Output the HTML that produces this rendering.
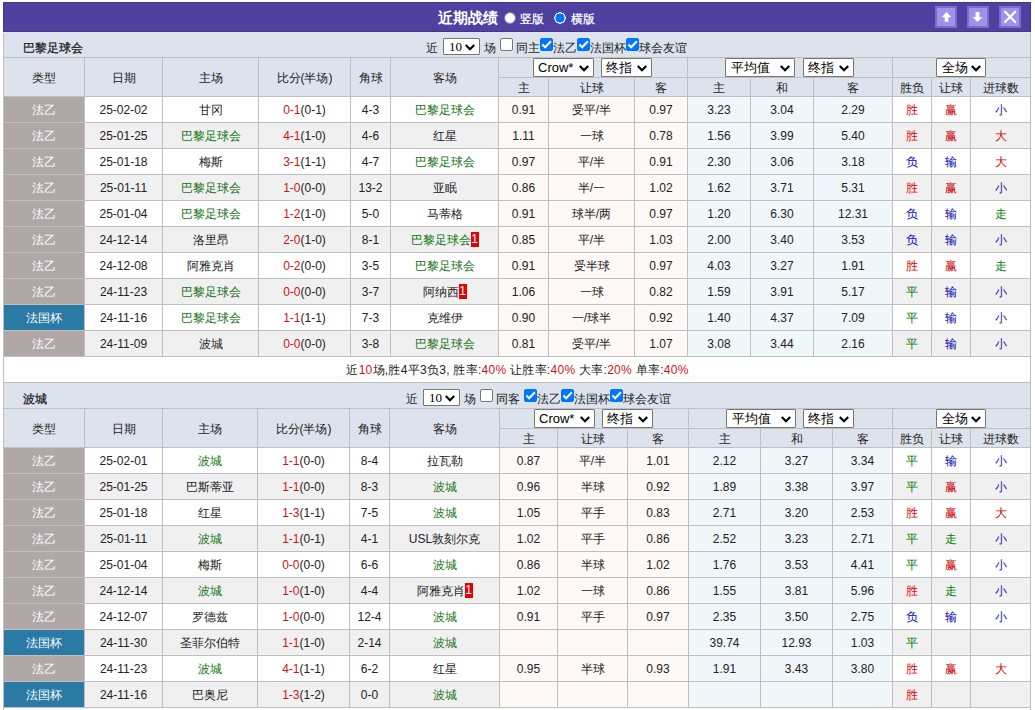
<!DOCTYPE html><html><head><meta charset="utf-8"><style>
*{margin:0;padding:0}
html,body{width:1035px;height:710px;overflow:hidden;background:#fff}
body{position:relative;font-family:"Liberation Sans",sans-serif;font-size:12px;color:#222}
.a{position:absolute;box-sizing:border-box;white-space:nowrap;overflow:hidden}
.t{position:absolute;white-space:nowrap;color:#222}
.sel{position:absolute;box-sizing:border-box;background:#fff;border:1px solid #767676;border-radius:1px;color:#000;white-space:nowrap}
.cb{position:absolute;width:13px;height:13px;box-sizing:border-box;border:1px solid #767676;border-radius:2px;background:#fff}
.cb.on{background:#0075FF;border-color:#0075FF}
.cb svg{position:absolute;left:-1px;top:-1px}
.radio{position:absolute;width:12px;height:12px;box-sizing:border-box;border-radius:50%;background:#fff;border:1px solid #767676}
.radio.on{border:none;background:radial-gradient(circle at 6px 6px,#0075FF 0,#0075FF 4.3px,#fff 4.8px,#fff 5.5px,#0060d0 6px)}
.rc{display:inline-block;background:#E80000;color:#fff;font-size:12px;line-height:15px;height:15px;width:8px;text-align:center;vertical-align:middle;margin-top:-2px;letter-spacing:0}
</style></head><body><div class="a" style="left:3px;top:2px;width:1028px;height:30px;background:#5040A0;border:1px solid #433589;"></div><div class="a" style="left:3px;top:32px;width:1028px;height:1px;background:#E4E4F8;"></div><div class="t" style="left:438px;top:8px;color:#fff;font-weight:bold;font-size:15px;line-height:20px;">近期战绩</div><div class="radio" style="left:504px;top:12px"></div><div class="t" style="left:520px;top:11px;color:#fff;font-size:12px;line-height:17px;-webkit-text-stroke:0.25px #fff;">竖版</div><div class="radio on" style="left:554px;top:12px"></div><div class="t" style="left:571px;top:11px;color:#fff;font-size:12px;line-height:17px;-webkit-text-stroke:0.25px #fff;">横版</div><div class="a" style="left:935px;top:6px;width:22px;height:22px;background:#A191EB;box-sizing:border-box;border:2px solid #7C6DCD"><svg style="position:absolute;left:-2px;top:-2px" width="22" height="22" viewBox="0 0 22 22"><path d="M11.5 6 L16.3 11.2 L13.3 11.2 L13.3 15.8 L9.7 15.8 L9.7 11.2 L6.7 11.2 Z" fill="#fff"/></svg></div><div class="a" style="left:967px;top:6px;width:22px;height:22px;background:#A191EB;box-sizing:border-box;border:2px solid #7C6DCD"><svg style="position:absolute;left:-2px;top:-2px" width="22" height="22" viewBox="0 0 22 22"><path d="M10.5 16 L15.4 11 L12.4 11 L12.4 6 L8.6 6 L8.6 11 L5.6 11 Z" fill="#fff"/></svg></div><div class="a" style="left:999px;top:6px;width:22px;height:22px;background:#A191EB;box-sizing:border-box;border:2px solid #7C6DCD"><svg style="position:absolute;left:-2px;top:-2px" width="22" height="22" viewBox="0 0 22 22"><path d="M6 5.8 L16.2 16 M16.2 5.8 L6 16" stroke="#fff" stroke-width="2.2" stroke-linecap="round"/></svg></div><div class="a" style="left:3px;top:33px;width:1028px;height:25px;background:#DCE3EC;border-left:1px solid #BFBFBF;border-right:1px solid #BFBFBF;"></div><div class="t" style="left:23px;top:39px;font-size:12px;line-height:18px;color:#222222;-webkit-text-stroke:0.3px #222222;">巴黎足球会</div><div class="t" style="left:426px;top:39px;font-size:12px;line-height:18px;">近</div><div class="sel" style="left:443px;top:38px;width:37px;height:17px;font-size:13px;line-height:15px;"><span style="position:absolute;left:5px;top:0"><span style="font-family:Liberation Serif;font-size:13px">10</span></span><svg class="chev" width="10" height="7" viewBox="0 0 10 7" style="position:absolute;right:4px;top:5px"><path d="M0.8 1 L5 5.2 L9.2 1" fill="none" stroke="#000" stroke-width="2.2"/></svg></div><div class="t" style="left:484px;top:39px;font-size:12px;line-height:18px;">场</div><div class="cb" style="left:500px;top:38px"></div><div class="t" style="left:516px;top:39px;font-size:12px;line-height:18px;">同主</div><div class="cb on" style="left:540px;top:38px"><svg width="13" height="13" viewBox="0 0 13 13"><path d="M2.4 6.4 L5.2 9.3 L10.9 3.3" fill="none" stroke="#fff" stroke-width="2.1"/></svg></div><div class="t" style="left:553px;top:39px;font-size:12px;line-height:18px;">法乙</div><div class="cb on" style="left:577px;top:38px"><svg width="13" height="13" viewBox="0 0 13 13"><path d="M2.4 6.4 L5.2 9.3 L10.9 3.3" fill="none" stroke="#fff" stroke-width="2.1"/></svg></div><div class="t" style="left:590px;top:39px;font-size:12px;line-height:18px;">法国杯</div><div class="cb on" style="left:626px;top:38px"><svg width="13" height="13" viewBox="0 0 13 13"><path d="M2.4 6.4 L5.2 9.3 L10.9 3.3" fill="none" stroke="#fff" stroke-width="2.1"/></svg></div><div class="t" style="left:639px;top:39px;font-size:12px;line-height:18px;">球会友谊</div><div class="a" style="left:3px;top:57px;width:82px;height:40px;border:1px solid #BFBFBF;background:#DCE3EC;line-height:36px;padding-top:2px;text-align:center;color:#222222;">类型</div><div class="a" style="left:84px;top:57px;width:79px;height:40px;border:1px solid #BFBFBF;background:#DCE3EC;line-height:36px;padding-top:2px;text-align:center;color:#222222;">日期</div><div class="a" style="left:162px;top:57px;width:97px;height:40px;border:1px solid #BFBFBF;background:#DCE3EC;line-height:36px;padding-top:2px;text-align:center;color:#222222;">主场</div><div class="a" style="left:258px;top:57px;width:93px;height:40px;border:1px solid #BFBFBF;background:#DCE3EC;line-height:36px;padding-top:2px;text-align:center;color:#222222;">比分(半场)</div><div class="a" style="left:350px;top:57px;width:41px;height:40px;border:1px solid #BFBFBF;background:#DCE3EC;line-height:36px;padding-top:2px;text-align:center;color:#222222;">角球</div><div class="a" style="left:390px;top:57px;width:109px;height:40px;border:1px solid #BFBFBF;background:#DCE3EC;line-height:36px;padding-top:2px;text-align:center;color:#222222;">客场</div><div class="a" style="left:498px;top:57px;width:190px;height:21px;border:1px solid #BFBFBF;background:#DCE3EC;line-height:18px;padding-top:1px;"></div><div class="a" style="left:687px;top:57px;width:206px;height:21px;border:1px solid #BFBFBF;background:#DCE3EC;line-height:18px;padding-top:1px;"></div><div class="a" style="left:892px;top:57px;width:139px;height:21px;border:1px solid #BFBFBF;background:#DCE3EC;line-height:18px;padding-top:1px;"></div><div class="sel" style="left:533px;top:58px;width:61px;height:19px;font-size:13px;line-height:17px;"><span style="position:absolute;left:4px;top:0">Crow*</span><svg class="chev" width="10" height="7" viewBox="0 0 10 7" style="position:absolute;right:4px;top:6px"><path d="M0.8 1 L5 5.2 L9.2 1" fill="none" stroke="#000" stroke-width="2.2"/></svg></div><div class="sel" style="left:601px;top:58px;width:51px;height:19px;font-size:13px;line-height:17px;"><span style="position:absolute;left:4px;top:0">终指</span><svg class="chev" width="10" height="7" viewBox="0 0 10 7" style="position:absolute;right:4px;top:6px"><path d="M0.8 1 L5 5.2 L9.2 1" fill="none" stroke="#000" stroke-width="2.2"/></svg></div><div class="sel" style="left:725px;top:58px;width:70px;height:19px;font-size:13px;line-height:17px;"><span style="position:absolute;left:5px;top:0">平均值</span><svg class="chev" width="10" height="7" viewBox="0 0 10 7" style="position:absolute;right:4px;top:6px"><path d="M0.8 1 L5 5.2 L9.2 1" fill="none" stroke="#000" stroke-width="2.2"/></svg></div><div class="sel" style="left:803px;top:58px;width:51px;height:19px;font-size:13px;line-height:17px;"><span style="position:absolute;left:4px;top:0">终指</span><svg class="chev" width="10" height="7" viewBox="0 0 10 7" style="position:absolute;right:4px;top:6px"><path d="M0.8 1 L5 5.2 L9.2 1" fill="none" stroke="#000" stroke-width="2.2"/></svg></div><div class="sel" style="left:936px;top:58px;width:50px;height:19px;font-size:13px;line-height:17px;"><span style="position:absolute;left:5px;top:0">全场</span><svg class="chev" width="10" height="7" viewBox="0 0 10 7" style="position:absolute;right:4px;top:6px"><path d="M0.8 1 L5 5.2 L9.2 1" fill="none" stroke="#000" stroke-width="2.2"/></svg></div><div class="a" style="left:498px;top:77px;width:51px;height:20px;border:1px solid #BFBFBF;background:#DCE3EC;line-height:16px;padding-top:2px;text-align:center;color:#222222;">主</div><div class="a" style="left:548px;top:77px;width:87px;height:20px;border:1px solid #BFBFBF;background:#DCE3EC;line-height:16px;padding-top:2px;text-align:center;color:#222222;">让球</div><div class="a" style="left:634px;top:77px;width:54px;height:20px;border:1px solid #BFBFBF;background:#DCE3EC;line-height:16px;padding-top:2px;text-align:center;color:#222222;">客</div><div class="a" style="left:687px;top:77px;width:64px;height:20px;border:1px solid #BFBFBF;background:#DCE3EC;line-height:16px;padding-top:2px;text-align:center;color:#222222;">主</div><div class="a" style="left:750px;top:77px;width:64px;height:20px;border:1px solid #BFBFBF;background:#DCE3EC;line-height:16px;padding-top:2px;text-align:center;color:#222222;">和</div><div class="a" style="left:813px;top:77px;width:80px;height:20px;border:1px solid #BFBFBF;background:#DCE3EC;line-height:16px;padding-top:2px;text-align:center;color:#222222;">客</div><div class="a" style="left:892px;top:77px;width:40px;height:20px;border:1px solid #BFBFBF;background:#DCE3EC;line-height:16px;padding-top:2px;text-align:center;color:#222222;">胜负</div><div class="a" style="left:931px;top:77px;width:40px;height:20px;border:1px solid #BFBFBF;background:#DCE3EC;line-height:16px;padding-top:2px;text-align:center;color:#222222;">让球</div><div class="a" style="left:970px;top:77px;width:61px;height:20px;border:1px solid #BFBFBF;background:#DCE3EC;line-height:16px;padding-top:2px;text-align:center;color:#222222;">进球数</div><div class="a" style="left:3px;top:96px;width:82px;height:27px;border:1px solid #BFBFBF;background:#B0A8A7;line-height:24px;padding-top:1px;text-align:center;color:#fff;">法乙</div><div class="a" style="left:84px;top:96px;width:79px;height:27px;border:1px solid #BFBFBF;background:#FFFFFF;line-height:24px;padding-top:1px;text-align:center;color:#222222;">25-02-02</div><div class="a" style="left:162px;top:96px;width:97px;height:27px;border:1px solid #BFBFBF;background:#FFFFFF;line-height:24px;padding-top:1px;text-align:center;color:#222222;">甘冈</div><div class="a" style="left:258px;top:96px;width:93px;height:27px;border:1px solid #BFBFBF;background:#FFFFFF;line-height:24px;padding-top:1px;text-align:center;color:#222222;"><span style="color:#CC1418">0-1</span>(0-1)</div><div class="a" style="left:350px;top:96px;width:41px;height:27px;border:1px solid #BFBFBF;background:#FFFFFF;line-height:24px;padding-top:1px;text-align:center;color:#222222;">4-3</div><div class="a" style="left:390px;top:96px;width:109px;height:27px;border:1px solid #BFBFBF;background:#FFFFFF;line-height:24px;padding-top:1px;text-align:center;color:#222222;"><span style="color:#137313">巴黎足球会</span></div><div class="a" style="left:498px;top:96px;width:51px;height:27px;border:1px solid #BFBFBF;background:#FEF9F6;line-height:24px;padding-top:1px;text-align:center;color:#222222;">0.91</div><div class="a" style="left:548px;top:96px;width:87px;height:27px;border:1px solid #BFBFBF;background:#FEF9F6;line-height:24px;padding-top:1px;text-align:center;color:#222222;">受平/半</div><div class="a" style="left:634px;top:96px;width:54px;height:27px;border:1px solid #BFBFBF;background:#FEF9F6;line-height:24px;padding-top:1px;text-align:center;color:#222222;">0.97</div><div class="a" style="left:687px;top:96px;width:64px;height:27px;border:1px solid #BFBFBF;background:#F0F7FB;line-height:24px;padding-top:1px;text-align:center;color:#222222;">3.23</div><div class="a" style="left:750px;top:96px;width:64px;height:27px;border:1px solid #BFBFBF;background:#F0F7FB;line-height:24px;padding-top:1px;text-align:center;color:#222222;">3.04</div><div class="a" style="left:813px;top:96px;width:80px;height:27px;border:1px solid #BFBFBF;background:#F0F7FB;line-height:24px;padding-top:1px;text-align:center;color:#222222;">2.29</div><div class="a" style="left:892px;top:96px;width:40px;height:27px;border:1px solid #BFBFBF;background:#FFFFFF;line-height:24px;padding-top:1px;text-align:center;"><span style="color:#E80000">胜</span></div><div class="a" style="left:931px;top:96px;width:40px;height:27px;border:1px solid #BFBFBF;background:#FFFFFF;line-height:24px;padding-top:1px;text-align:center;"><span style="color:#CC0000">赢</span></div><div class="a" style="left:970px;top:96px;width:61px;height:27px;border:1px solid #BFBFBF;background:#FFFFFF;line-height:24px;padding-top:1px;text-align:center;"><span style="color:#1422A0">小</span></div><div class="a" style="left:3px;top:122px;width:82px;height:27px;border:1px solid #BFBFBF;background:#B0A8A7;line-height:24px;padding-top:1px;text-align:center;color:#fff;">法乙</div><div class="a" style="left:84px;top:122px;width:79px;height:27px;border:1px solid #BFBFBF;background:#F0F0F0;line-height:24px;padding-top:1px;text-align:center;color:#222222;">25-01-25</div><div class="a" style="left:162px;top:122px;width:97px;height:27px;border:1px solid #BFBFBF;background:#F0F0F0;line-height:24px;padding-top:1px;text-align:center;color:#222222;"><span style="color:#137313">巴黎足球会</span></div><div class="a" style="left:258px;top:122px;width:93px;height:27px;border:1px solid #BFBFBF;background:#F0F0F0;line-height:24px;padding-top:1px;text-align:center;color:#222222;"><span style="color:#CC1418">4-1</span>(1-0)</div><div class="a" style="left:350px;top:122px;width:41px;height:27px;border:1px solid #BFBFBF;background:#F0F0F0;line-height:24px;padding-top:1px;text-align:center;color:#222222;">4-6</div><div class="a" style="left:390px;top:122px;width:109px;height:27px;border:1px solid #BFBFBF;background:#F0F0F0;line-height:24px;padding-top:1px;text-align:center;color:#222222;">红星</div><div class="a" style="left:498px;top:122px;width:51px;height:27px;border:1px solid #BFBFBF;background:#FEF9F6;line-height:24px;padding-top:1px;text-align:center;color:#222222;">1.11</div><div class="a" style="left:548px;top:122px;width:87px;height:27px;border:1px solid #BFBFBF;background:#FEF9F6;line-height:24px;padding-top:1px;text-align:center;color:#222222;">一球</div><div class="a" style="left:634px;top:122px;width:54px;height:27px;border:1px solid #BFBFBF;background:#FEF9F6;line-height:24px;padding-top:1px;text-align:center;color:#222222;">0.78</div><div class="a" style="left:687px;top:122px;width:64px;height:27px;border:1px solid #BFBFBF;background:#F0F7FB;line-height:24px;padding-top:1px;text-align:center;color:#222222;">1.56</div><div class="a" style="left:750px;top:122px;width:64px;height:27px;border:1px solid #BFBFBF;background:#F0F7FB;line-height:24px;padding-top:1px;text-align:center;color:#222222;">3.99</div><div class="a" style="left:813px;top:122px;width:80px;height:27px;border:1px solid #BFBFBF;background:#F0F7FB;line-height:24px;padding-top:1px;text-align:center;color:#222222;">5.40</div><div class="a" style="left:892px;top:122px;width:40px;height:27px;border:1px solid #BFBFBF;background:#F0F0F0;line-height:24px;padding-top:1px;text-align:center;"><span style="color:#E80000">胜</span></div><div class="a" style="left:931px;top:122px;width:40px;height:27px;border:1px solid #BFBFBF;background:#F0F0F0;line-height:24px;padding-top:1px;text-align:center;"><span style="color:#CC0000">赢</span></div><div class="a" style="left:970px;top:122px;width:61px;height:27px;border:1px solid #BFBFBF;background:#F0F0F0;line-height:24px;padding-top:1px;text-align:center;"><span style="color:#D40000">大</span></div><div class="a" style="left:3px;top:148px;width:82px;height:27px;border:1px solid #BFBFBF;background:#B0A8A7;line-height:24px;padding-top:1px;text-align:center;color:#fff;">法乙</div><div class="a" style="left:84px;top:148px;width:79px;height:27px;border:1px solid #BFBFBF;background:#FFFFFF;line-height:24px;padding-top:1px;text-align:center;color:#222222;">25-01-18</div><div class="a" style="left:162px;top:148px;width:97px;height:27px;border:1px solid #BFBFBF;background:#FFFFFF;line-height:24px;padding-top:1px;text-align:center;color:#222222;">梅斯</div><div class="a" style="left:258px;top:148px;width:93px;height:27px;border:1px solid #BFBFBF;background:#FFFFFF;line-height:24px;padding-top:1px;text-align:center;color:#222222;"><span style="color:#CC1418">3-1</span>(1-1)</div><div class="a" style="left:350px;top:148px;width:41px;height:27px;border:1px solid #BFBFBF;background:#FFFFFF;line-height:24px;padding-top:1px;text-align:center;color:#222222;">4-7</div><div class="a" style="left:390px;top:148px;width:109px;height:27px;border:1px solid #BFBFBF;background:#FFFFFF;line-height:24px;padding-top:1px;text-align:center;color:#222222;"><span style="color:#137313">巴黎足球会</span></div><div class="a" style="left:498px;top:148px;width:51px;height:27px;border:1px solid #BFBFBF;background:#FEF9F6;line-height:24px;padding-top:1px;text-align:center;color:#222222;">0.97</div><div class="a" style="left:548px;top:148px;width:87px;height:27px;border:1px solid #BFBFBF;background:#FEF9F6;line-height:24px;padding-top:1px;text-align:center;color:#222222;">平/半</div><div class="a" style="left:634px;top:148px;width:54px;height:27px;border:1px solid #BFBFBF;background:#FEF9F6;line-height:24px;padding-top:1px;text-align:center;color:#222222;">0.91</div><div class="a" style="left:687px;top:148px;width:64px;height:27px;border:1px solid #BFBFBF;background:#F0F7FB;line-height:24px;padding-top:1px;text-align:center;color:#222222;">2.30</div><div class="a" style="left:750px;top:148px;width:64px;height:27px;border:1px solid #BFBFBF;background:#F0F7FB;line-height:24px;padding-top:1px;text-align:center;color:#222222;">3.06</div><div class="a" style="left:813px;top:148px;width:80px;height:27px;border:1px solid #BFBFBF;background:#F0F7FB;line-height:24px;padding-top:1px;text-align:center;color:#222222;">3.18</div><div class="a" style="left:892px;top:148px;width:40px;height:27px;border:1px solid #BFBFBF;background:#FFFFFF;line-height:24px;padding-top:1px;text-align:center;"><span style="color:#0000C8">负</span></div><div class="a" style="left:931px;top:148px;width:40px;height:27px;border:1px solid #BFBFBF;background:#FFFFFF;line-height:24px;padding-top:1px;text-align:center;"><span style="color:#0000AA">输</span></div><div class="a" style="left:970px;top:148px;width:61px;height:27px;border:1px solid #BFBFBF;background:#FFFFFF;line-height:24px;padding-top:1px;text-align:center;"><span style="color:#D40000">大</span></div><div class="a" style="left:3px;top:174px;width:82px;height:27px;border:1px solid #BFBFBF;background:#B0A8A7;line-height:24px;padding-top:1px;text-align:center;color:#fff;">法乙</div><div class="a" style="left:84px;top:174px;width:79px;height:27px;border:1px solid #BFBFBF;background:#F0F0F0;line-height:24px;padding-top:1px;text-align:center;color:#222222;">25-01-11</div><div class="a" style="left:162px;top:174px;width:97px;height:27px;border:1px solid #BFBFBF;background:#F0F0F0;line-height:24px;padding-top:1px;text-align:center;color:#222222;"><span style="color:#137313">巴黎足球会</span></div><div class="a" style="left:258px;top:174px;width:93px;height:27px;border:1px solid #BFBFBF;background:#F0F0F0;line-height:24px;padding-top:1px;text-align:center;color:#222222;"><span style="color:#CC1418">1-0</span>(0-0)</div><div class="a" style="left:350px;top:174px;width:41px;height:27px;border:1px solid #BFBFBF;background:#F0F0F0;line-height:24px;padding-top:1px;text-align:center;color:#222222;">13-2</div><div class="a" style="left:390px;top:174px;width:109px;height:27px;border:1px solid #BFBFBF;background:#F0F0F0;line-height:24px;padding-top:1px;text-align:center;color:#222222;">亚眠</div><div class="a" style="left:498px;top:174px;width:51px;height:27px;border:1px solid #BFBFBF;background:#FEF9F6;line-height:24px;padding-top:1px;text-align:center;color:#222222;">0.86</div><div class="a" style="left:548px;top:174px;width:87px;height:27px;border:1px solid #BFBFBF;background:#FEF9F6;line-height:24px;padding-top:1px;text-align:center;color:#222222;">半/一</div><div class="a" style="left:634px;top:174px;width:54px;height:27px;border:1px solid #BFBFBF;background:#FEF9F6;line-height:24px;padding-top:1px;text-align:center;color:#222222;">1.02</div><div class="a" style="left:687px;top:174px;width:64px;height:27px;border:1px solid #BFBFBF;background:#F0F7FB;line-height:24px;padding-top:1px;text-align:center;color:#222222;">1.62</div><div class="a" style="left:750px;top:174px;width:64px;height:27px;border:1px solid #BFBFBF;background:#F0F7FB;line-height:24px;padding-top:1px;text-align:center;color:#222222;">3.71</div><div class="a" style="left:813px;top:174px;width:80px;height:27px;border:1px solid #BFBFBF;background:#F0F7FB;line-height:24px;padding-top:1px;text-align:center;color:#222222;">5.31</div><div class="a" style="left:892px;top:174px;width:40px;height:27px;border:1px solid #BFBFBF;background:#F0F0F0;line-height:24px;padding-top:1px;text-align:center;"><span style="color:#E80000">胜</span></div><div class="a" style="left:931px;top:174px;width:40px;height:27px;border:1px solid #BFBFBF;background:#F0F0F0;line-height:24px;padding-top:1px;text-align:center;"><span style="color:#CC0000">赢</span></div><div class="a" style="left:970px;top:174px;width:61px;height:27px;border:1px solid #BFBFBF;background:#F0F0F0;line-height:24px;padding-top:1px;text-align:center;"><span style="color:#1422A0">小</span></div><div class="a" style="left:3px;top:200px;width:82px;height:27px;border:1px solid #BFBFBF;background:#B0A8A7;line-height:24px;padding-top:1px;text-align:center;color:#fff;">法乙</div><div class="a" style="left:84px;top:200px;width:79px;height:27px;border:1px solid #BFBFBF;background:#FFFFFF;line-height:24px;padding-top:1px;text-align:center;color:#222222;">25-01-04</div><div class="a" style="left:162px;top:200px;width:97px;height:27px;border:1px solid #BFBFBF;background:#FFFFFF;line-height:24px;padding-top:1px;text-align:center;color:#222222;"><span style="color:#137313">巴黎足球会</span></div><div class="a" style="left:258px;top:200px;width:93px;height:27px;border:1px solid #BFBFBF;background:#FFFFFF;line-height:24px;padding-top:1px;text-align:center;color:#222222;"><span style="color:#CC1418">1-2</span>(1-0)</div><div class="a" style="left:350px;top:200px;width:41px;height:27px;border:1px solid #BFBFBF;background:#FFFFFF;line-height:24px;padding-top:1px;text-align:center;color:#222222;">5-0</div><div class="a" style="left:390px;top:200px;width:109px;height:27px;border:1px solid #BFBFBF;background:#FFFFFF;line-height:24px;padding-top:1px;text-align:center;color:#222222;">马蒂格</div><div class="a" style="left:498px;top:200px;width:51px;height:27px;border:1px solid #BFBFBF;background:#FEF9F6;line-height:24px;padding-top:1px;text-align:center;color:#222222;">0.91</div><div class="a" style="left:548px;top:200px;width:87px;height:27px;border:1px solid #BFBFBF;background:#FEF9F6;line-height:24px;padding-top:1px;text-align:center;color:#222222;">球半/两</div><div class="a" style="left:634px;top:200px;width:54px;height:27px;border:1px solid #BFBFBF;background:#FEF9F6;line-height:24px;padding-top:1px;text-align:center;color:#222222;">0.97</div><div class="a" style="left:687px;top:200px;width:64px;height:27px;border:1px solid #BFBFBF;background:#F0F7FB;line-height:24px;padding-top:1px;text-align:center;color:#222222;">1.20</div><div class="a" style="left:750px;top:200px;width:64px;height:27px;border:1px solid #BFBFBF;background:#F0F7FB;line-height:24px;padding-top:1px;text-align:center;color:#222222;">6.30</div><div class="a" style="left:813px;top:200px;width:80px;height:27px;border:1px solid #BFBFBF;background:#F0F7FB;line-height:24px;padding-top:1px;text-align:center;color:#222222;">12.31</div><div class="a" style="left:892px;top:200px;width:40px;height:27px;border:1px solid #BFBFBF;background:#FFFFFF;line-height:24px;padding-top:1px;text-align:center;"><span style="color:#0000C8">负</span></div><div class="a" style="left:931px;top:200px;width:40px;height:27px;border:1px solid #BFBFBF;background:#FFFFFF;line-height:24px;padding-top:1px;text-align:center;"><span style="color:#0000AA">输</span></div><div class="a" style="left:970px;top:200px;width:61px;height:27px;border:1px solid #BFBFBF;background:#FFFFFF;line-height:24px;padding-top:1px;text-align:center;"><span style="color:#008000">走</span></div><div class="a" style="left:3px;top:226px;width:82px;height:27px;border:1px solid #BFBFBF;background:#B0A8A7;line-height:24px;padding-top:1px;text-align:center;color:#fff;">法乙</div><div class="a" style="left:84px;top:226px;width:79px;height:27px;border:1px solid #BFBFBF;background:#F0F0F0;line-height:24px;padding-top:1px;text-align:center;color:#222222;">24-12-14</div><div class="a" style="left:162px;top:226px;width:97px;height:27px;border:1px solid #BFBFBF;background:#F0F0F0;line-height:24px;padding-top:1px;text-align:center;color:#222222;">洛里昂</div><div class="a" style="left:258px;top:226px;width:93px;height:27px;border:1px solid #BFBFBF;background:#F0F0F0;line-height:24px;padding-top:1px;text-align:center;color:#222222;"><span style="color:#CC1418">2-0</span>(1-0)</div><div class="a" style="left:350px;top:226px;width:41px;height:27px;border:1px solid #BFBFBF;background:#F0F0F0;line-height:24px;padding-top:1px;text-align:center;color:#222222;">8-1</div><div class="a" style="left:390px;top:226px;width:109px;height:27px;border:1px solid #BFBFBF;background:#F0F0F0;line-height:24px;padding-top:1px;text-align:center;color:#222222;"><span style="color:#137313">巴黎足球会</span><span class="rc">1</span></div><div class="a" style="left:498px;top:226px;width:51px;height:27px;border:1px solid #BFBFBF;background:#FEF9F6;line-height:24px;padding-top:1px;text-align:center;color:#222222;">0.85</div><div class="a" style="left:548px;top:226px;width:87px;height:27px;border:1px solid #BFBFBF;background:#FEF9F6;line-height:24px;padding-top:1px;text-align:center;color:#222222;">平/半</div><div class="a" style="left:634px;top:226px;width:54px;height:27px;border:1px solid #BFBFBF;background:#FEF9F6;line-height:24px;padding-top:1px;text-align:center;color:#222222;">1.03</div><div class="a" style="left:687px;top:226px;width:64px;height:27px;border:1px solid #BFBFBF;background:#F0F7FB;line-height:24px;padding-top:1px;text-align:center;color:#222222;">2.00</div><div class="a" style="left:750px;top:226px;width:64px;height:27px;border:1px solid #BFBFBF;background:#F0F7FB;line-height:24px;padding-top:1px;text-align:center;color:#222222;">3.40</div><div class="a" style="left:813px;top:226px;width:80px;height:27px;border:1px solid #BFBFBF;background:#F0F7FB;line-height:24px;padding-top:1px;text-align:center;color:#222222;">3.53</div><div class="a" style="left:892px;top:226px;width:40px;height:27px;border:1px solid #BFBFBF;background:#F0F0F0;line-height:24px;padding-top:1px;text-align:center;"><span style="color:#0000C8">负</span></div><div class="a" style="left:931px;top:226px;width:40px;height:27px;border:1px solid #BFBFBF;background:#F0F0F0;line-height:24px;padding-top:1px;text-align:center;"><span style="color:#0000AA">输</span></div><div class="a" style="left:970px;top:226px;width:61px;height:27px;border:1px solid #BFBFBF;background:#F0F0F0;line-height:24px;padding-top:1px;text-align:center;"><span style="color:#1422A0">小</span></div><div class="a" style="left:3px;top:252px;width:82px;height:27px;border:1px solid #BFBFBF;background:#B0A8A7;line-height:24px;padding-top:1px;text-align:center;color:#fff;">法乙</div><div class="a" style="left:84px;top:252px;width:79px;height:27px;border:1px solid #BFBFBF;background:#FFFFFF;line-height:24px;padding-top:1px;text-align:center;color:#222222;">24-12-08</div><div class="a" style="left:162px;top:252px;width:97px;height:27px;border:1px solid #BFBFBF;background:#FFFFFF;line-height:24px;padding-top:1px;text-align:center;color:#222222;">阿雅克肖</div><div class="a" style="left:258px;top:252px;width:93px;height:27px;border:1px solid #BFBFBF;background:#FFFFFF;line-height:24px;padding-top:1px;text-align:center;color:#222222;"><span style="color:#CC1418">0-2</span>(0-0)</div><div class="a" style="left:350px;top:252px;width:41px;height:27px;border:1px solid #BFBFBF;background:#FFFFFF;line-height:24px;padding-top:1px;text-align:center;color:#222222;">3-5</div><div class="a" style="left:390px;top:252px;width:109px;height:27px;border:1px solid #BFBFBF;background:#FFFFFF;line-height:24px;padding-top:1px;text-align:center;color:#222222;"><span style="color:#137313">巴黎足球会</span></div><div class="a" style="left:498px;top:252px;width:51px;height:27px;border:1px solid #BFBFBF;background:#FEF9F6;line-height:24px;padding-top:1px;text-align:center;color:#222222;">0.91</div><div class="a" style="left:548px;top:252px;width:87px;height:27px;border:1px solid #BFBFBF;background:#FEF9F6;line-height:24px;padding-top:1px;text-align:center;color:#222222;">受半球</div><div class="a" style="left:634px;top:252px;width:54px;height:27px;border:1px solid #BFBFBF;background:#FEF9F6;line-height:24px;padding-top:1px;text-align:center;color:#222222;">0.97</div><div class="a" style="left:687px;top:252px;width:64px;height:27px;border:1px solid #BFBFBF;background:#F0F7FB;line-height:24px;padding-top:1px;text-align:center;color:#222222;">4.03</div><div class="a" style="left:750px;top:252px;width:64px;height:27px;border:1px solid #BFBFBF;background:#F0F7FB;line-height:24px;padding-top:1px;text-align:center;color:#222222;">3.27</div><div class="a" style="left:813px;top:252px;width:80px;height:27px;border:1px solid #BFBFBF;background:#F0F7FB;line-height:24px;padding-top:1px;text-align:center;color:#222222;">1.91</div><div class="a" style="left:892px;top:252px;width:40px;height:27px;border:1px solid #BFBFBF;background:#FFFFFF;line-height:24px;padding-top:1px;text-align:center;"><span style="color:#E80000">胜</span></div><div class="a" style="left:931px;top:252px;width:40px;height:27px;border:1px solid #BFBFBF;background:#FFFFFF;line-height:24px;padding-top:1px;text-align:center;"><span style="color:#CC0000">赢</span></div><div class="a" style="left:970px;top:252px;width:61px;height:27px;border:1px solid #BFBFBF;background:#FFFFFF;line-height:24px;padding-top:1px;text-align:center;"><span style="color:#008000">走</span></div><div class="a" style="left:3px;top:278px;width:82px;height:27px;border:1px solid #BFBFBF;background:#B0A8A7;line-height:24px;padding-top:1px;text-align:center;color:#fff;">法乙</div><div class="a" style="left:84px;top:278px;width:79px;height:27px;border:1px solid #BFBFBF;background:#F0F0F0;line-height:24px;padding-top:1px;text-align:center;color:#222222;">24-11-23</div><div class="a" style="left:162px;top:278px;width:97px;height:27px;border:1px solid #BFBFBF;background:#F0F0F0;line-height:24px;padding-top:1px;text-align:center;color:#222222;"><span style="color:#137313">巴黎足球会</span></div><div class="a" style="left:258px;top:278px;width:93px;height:27px;border:1px solid #BFBFBF;background:#F0F0F0;line-height:24px;padding-top:1px;text-align:center;color:#222222;"><span style="color:#CC1418">0-0</span>(0-0)</div><div class="a" style="left:350px;top:278px;width:41px;height:27px;border:1px solid #BFBFBF;background:#F0F0F0;line-height:24px;padding-top:1px;text-align:center;color:#222222;">3-7</div><div class="a" style="left:390px;top:278px;width:109px;height:27px;border:1px solid #BFBFBF;background:#F0F0F0;line-height:24px;padding-top:1px;text-align:center;color:#222222;">阿纳西<span class="rc">1</span></div><div class="a" style="left:498px;top:278px;width:51px;height:27px;border:1px solid #BFBFBF;background:#FEF9F6;line-height:24px;padding-top:1px;text-align:center;color:#222222;">1.06</div><div class="a" style="left:548px;top:278px;width:87px;height:27px;border:1px solid #BFBFBF;background:#FEF9F6;line-height:24px;padding-top:1px;text-align:center;color:#222222;">一球</div><div class="a" style="left:634px;top:278px;width:54px;height:27px;border:1px solid #BFBFBF;background:#FEF9F6;line-height:24px;padding-top:1px;text-align:center;color:#222222;">0.82</div><div class="a" style="left:687px;top:278px;width:64px;height:27px;border:1px solid #BFBFBF;background:#F0F7FB;line-height:24px;padding-top:1px;text-align:center;color:#222222;">1.59</div><div class="a" style="left:750px;top:278px;width:64px;height:27px;border:1px solid #BFBFBF;background:#F0F7FB;line-height:24px;padding-top:1px;text-align:center;color:#222222;">3.91</div><div class="a" style="left:813px;top:278px;width:80px;height:27px;border:1px solid #BFBFBF;background:#F0F7FB;line-height:24px;padding-top:1px;text-align:center;color:#222222;">5.17</div><div class="a" style="left:892px;top:278px;width:40px;height:27px;border:1px solid #BFBFBF;background:#F0F0F0;line-height:24px;padding-top:1px;text-align:center;"><span style="color:#008000">平</span></div><div class="a" style="left:931px;top:278px;width:40px;height:27px;border:1px solid #BFBFBF;background:#F0F0F0;line-height:24px;padding-top:1px;text-align:center;"><span style="color:#0000AA">输</span></div><div class="a" style="left:970px;top:278px;width:61px;height:27px;border:1px solid #BFBFBF;background:#F0F0F0;line-height:24px;padding-top:1px;text-align:center;"><span style="color:#1422A0">小</span></div><div class="a" style="left:3px;top:304px;width:82px;height:27px;border:1px solid #BFBFBF;background:#2A7AA5;line-height:24px;padding-top:1px;text-align:center;color:#fff;">法国杯</div><div class="a" style="left:84px;top:304px;width:79px;height:27px;border:1px solid #BFBFBF;background:#FFFFFF;line-height:24px;padding-top:1px;text-align:center;color:#222222;">24-11-16</div><div class="a" style="left:162px;top:304px;width:97px;height:27px;border:1px solid #BFBFBF;background:#FFFFFF;line-height:24px;padding-top:1px;text-align:center;color:#222222;"><span style="color:#137313">巴黎足球会</span></div><div class="a" style="left:258px;top:304px;width:93px;height:27px;border:1px solid #BFBFBF;background:#FFFFFF;line-height:24px;padding-top:1px;text-align:center;color:#222222;"><span style="color:#CC1418">1-1</span>(1-1)</div><div class="a" style="left:350px;top:304px;width:41px;height:27px;border:1px solid #BFBFBF;background:#FFFFFF;line-height:24px;padding-top:1px;text-align:center;color:#222222;">7-3</div><div class="a" style="left:390px;top:304px;width:109px;height:27px;border:1px solid #BFBFBF;background:#FFFFFF;line-height:24px;padding-top:1px;text-align:center;color:#222222;">克维伊</div><div class="a" style="left:498px;top:304px;width:51px;height:27px;border:1px solid #BFBFBF;background:#FEF9F6;line-height:24px;padding-top:1px;text-align:center;color:#222222;">0.90</div><div class="a" style="left:548px;top:304px;width:87px;height:27px;border:1px solid #BFBFBF;background:#FEF9F6;line-height:24px;padding-top:1px;text-align:center;color:#222222;">一/球半</div><div class="a" style="left:634px;top:304px;width:54px;height:27px;border:1px solid #BFBFBF;background:#FEF9F6;line-height:24px;padding-top:1px;text-align:center;color:#222222;">0.92</div><div class="a" style="left:687px;top:304px;width:64px;height:27px;border:1px solid #BFBFBF;background:#F0F7FB;line-height:24px;padding-top:1px;text-align:center;color:#222222;">1.40</div><div class="a" style="left:750px;top:304px;width:64px;height:27px;border:1px solid #BFBFBF;background:#F0F7FB;line-height:24px;padding-top:1px;text-align:center;color:#222222;">4.37</div><div class="a" style="left:813px;top:304px;width:80px;height:27px;border:1px solid #BFBFBF;background:#F0F7FB;line-height:24px;padding-top:1px;text-align:center;color:#222222;">7.09</div><div class="a" style="left:892px;top:304px;width:40px;height:27px;border:1px solid #BFBFBF;background:#FFFFFF;line-height:24px;padding-top:1px;text-align:center;"><span style="color:#008000">平</span></div><div class="a" style="left:931px;top:304px;width:40px;height:27px;border:1px solid #BFBFBF;background:#FFFFFF;line-height:24px;padding-top:1px;text-align:center;"><span style="color:#0000AA">输</span></div><div class="a" style="left:970px;top:304px;width:61px;height:27px;border:1px solid #BFBFBF;background:#FFFFFF;line-height:24px;padding-top:1px;text-align:center;"><span style="color:#1422A0">小</span></div><div class="a" style="left:3px;top:330px;width:82px;height:27px;border:1px solid #BFBFBF;background:#B0A8A7;line-height:24px;padding-top:1px;text-align:center;color:#fff;">法乙</div><div class="a" style="left:84px;top:330px;width:79px;height:27px;border:1px solid #BFBFBF;background:#F0F0F0;line-height:24px;padding-top:1px;text-align:center;color:#222222;">24-11-09</div><div class="a" style="left:162px;top:330px;width:97px;height:27px;border:1px solid #BFBFBF;background:#F0F0F0;line-height:24px;padding-top:1px;text-align:center;color:#222222;">波城</div><div class="a" style="left:258px;top:330px;width:93px;height:27px;border:1px solid #BFBFBF;background:#F0F0F0;line-height:24px;padding-top:1px;text-align:center;color:#222222;"><span style="color:#CC1418">0-0</span>(0-0)</div><div class="a" style="left:350px;top:330px;width:41px;height:27px;border:1px solid #BFBFBF;background:#F0F0F0;line-height:24px;padding-top:1px;text-align:center;color:#222222;">3-8</div><div class="a" style="left:390px;top:330px;width:109px;height:27px;border:1px solid #BFBFBF;background:#F0F0F0;line-height:24px;padding-top:1px;text-align:center;color:#222222;"><span style="color:#137313">巴黎足球会</span></div><div class="a" style="left:498px;top:330px;width:51px;height:27px;border:1px solid #BFBFBF;background:#FEF9F6;line-height:24px;padding-top:1px;text-align:center;color:#222222;">0.81</div><div class="a" style="left:548px;top:330px;width:87px;height:27px;border:1px solid #BFBFBF;background:#FEF9F6;line-height:24px;padding-top:1px;text-align:center;color:#222222;">受平/半</div><div class="a" style="left:634px;top:330px;width:54px;height:27px;border:1px solid #BFBFBF;background:#FEF9F6;line-height:24px;padding-top:1px;text-align:center;color:#222222;">1.07</div><div class="a" style="left:687px;top:330px;width:64px;height:27px;border:1px solid #BFBFBF;background:#F0F7FB;line-height:24px;padding-top:1px;text-align:center;color:#222222;">3.08</div><div class="a" style="left:750px;top:330px;width:64px;height:27px;border:1px solid #BFBFBF;background:#F0F7FB;line-height:24px;padding-top:1px;text-align:center;color:#222222;">3.44</div><div class="a" style="left:813px;top:330px;width:80px;height:27px;border:1px solid #BFBFBF;background:#F0F7FB;line-height:24px;padding-top:1px;text-align:center;color:#222222;">2.16</div><div class="a" style="left:892px;top:330px;width:40px;height:27px;border:1px solid #BFBFBF;background:#F0F0F0;line-height:24px;padding-top:1px;text-align:center;"><span style="color:#008000">平</span></div><div class="a" style="left:931px;top:330px;width:40px;height:27px;border:1px solid #BFBFBF;background:#F0F0F0;line-height:24px;padding-top:1px;text-align:center;"><span style="color:#0000AA">输</span></div><div class="a" style="left:970px;top:330px;width:61px;height:27px;border:1px solid #BFBFBF;background:#F0F0F0;line-height:24px;padding-top:1px;text-align:center;"><span style="color:#1422A0">小</span></div><div class="a" style="left:3px;top:356px;width:1028px;height:27px;border:1px solid #BFBFBF;background:#fff;line-height:24px;padding-top:1px;padding-left:1px;letter-spacing:0.28px;text-align:center;color:#222222;">近<span style="color:#CC1418">10</span>场,胜4平3负3, 胜率:<span style="color:#CC1418">40%</span> 让胜率:<span style="color:#CC1418">40%</span> 大率:<span style="color:#CC1418">20%</span> 单率:<span style="color:#CC1418">40%</span></div><div class="a" style="left:3px;top:382px;width:1028px;height:27px;background:#DCE3EC;border-left:1px solid #BFBFBF;border-right:1px solid #BFBFBF;border-top:1px solid #BFBFBF;"></div><div class="t" style="left:23px;top:390px;font-size:12px;line-height:18px;color:#222222;-webkit-text-stroke:0.3px #222222;">波城</div><div class="t" style="left:406px;top:390px;font-size:12px;line-height:18px;">近</div><div class="sel" style="left:423px;top:389px;width:37px;height:17px;font-size:13px;line-height:15px;"><span style="position:absolute;left:5px;top:0"><span style="font-family:Liberation Serif;font-size:13px">10</span></span><svg class="chev" width="10" height="7" viewBox="0 0 10 7" style="position:absolute;right:4px;top:5px"><path d="M0.8 1 L5 5.2 L9.2 1" fill="none" stroke="#000" stroke-width="2.2"/></svg></div><div class="t" style="left:464px;top:390px;font-size:12px;line-height:18px;">场</div><div class="cb" style="left:480px;top:389px"></div><div class="t" style="left:496px;top:390px;font-size:12px;line-height:18px;">同客</div><div class="cb on" style="left:524px;top:389px"><svg width="13" height="13" viewBox="0 0 13 13"><path d="M2.4 6.4 L5.2 9.3 L10.9 3.3" fill="none" stroke="#fff" stroke-width="2.1"/></svg></div><div class="t" style="left:537px;top:390px;font-size:12px;line-height:18px;">法乙</div><div class="cb on" style="left:561px;top:389px"><svg width="13" height="13" viewBox="0 0 13 13"><path d="M2.4 6.4 L5.2 9.3 L10.9 3.3" fill="none" stroke="#fff" stroke-width="2.1"/></svg></div><div class="t" style="left:574px;top:390px;font-size:12px;line-height:18px;">法国杯</div><div class="cb on" style="left:610px;top:389px"><svg width="13" height="13" viewBox="0 0 13 13"><path d="M2.4 6.4 L5.2 9.3 L10.9 3.3" fill="none" stroke="#fff" stroke-width="2.1"/></svg></div><div class="t" style="left:623px;top:390px;font-size:12px;line-height:18px;">球会友谊</div><div class="a" style="left:3px;top:408px;width:82px;height:40px;border:1px solid #BFBFBF;background:#DCE3EC;line-height:36px;padding-top:2px;text-align:center;color:#222222;">类型</div><div class="a" style="left:84px;top:408px;width:79px;height:40px;border:1px solid #BFBFBF;background:#DCE3EC;line-height:36px;padding-top:2px;text-align:center;color:#222222;">日期</div><div class="a" style="left:162px;top:408px;width:96px;height:40px;border:1px solid #BFBFBF;background:#DCE3EC;line-height:36px;padding-top:2px;text-align:center;color:#222222;">主场</div><div class="a" style="left:257px;top:408px;width:93px;height:40px;border:1px solid #BFBFBF;background:#DCE3EC;line-height:36px;padding-top:2px;text-align:center;color:#222222;">比分(半场)</div><div class="a" style="left:349px;top:408px;width:41px;height:40px;border:1px solid #BFBFBF;background:#DCE3EC;line-height:36px;padding-top:2px;text-align:center;color:#222222;">角球</div><div class="a" style="left:389px;top:408px;width:111px;height:40px;border:1px solid #BFBFBF;background:#DCE3EC;line-height:36px;padding-top:2px;text-align:center;color:#222222;">客场</div><div class="a" style="left:499px;top:408px;width:190px;height:21px;border:1px solid #BFBFBF;background:#DCE3EC;line-height:18px;padding-top:1px;"></div><div class="a" style="left:688px;top:408px;width:205px;height:21px;border:1px solid #BFBFBF;background:#DCE3EC;line-height:18px;padding-top:1px;"></div><div class="a" style="left:892px;top:408px;width:139px;height:21px;border:1px solid #BFBFBF;background:#DCE3EC;line-height:18px;padding-top:1px;"></div><div class="sel" style="left:534px;top:409px;width:61px;height:19px;font-size:13px;line-height:17px;"><span style="position:absolute;left:4px;top:0">Crow*</span><svg class="chev" width="10" height="7" viewBox="0 0 10 7" style="position:absolute;right:4px;top:6px"><path d="M0.8 1 L5 5.2 L9.2 1" fill="none" stroke="#000" stroke-width="2.2"/></svg></div><div class="sel" style="left:602px;top:409px;width:51px;height:19px;font-size:13px;line-height:17px;"><span style="position:absolute;left:4px;top:0">终指</span><svg class="chev" width="10" height="7" viewBox="0 0 10 7" style="position:absolute;right:4px;top:6px"><path d="M0.8 1 L5 5.2 L9.2 1" fill="none" stroke="#000" stroke-width="2.2"/></svg></div><div class="sel" style="left:726px;top:409px;width:70px;height:19px;font-size:13px;line-height:17px;"><span style="position:absolute;left:5px;top:0">平均值</span><svg class="chev" width="10" height="7" viewBox="0 0 10 7" style="position:absolute;right:4px;top:6px"><path d="M0.8 1 L5 5.2 L9.2 1" fill="none" stroke="#000" stroke-width="2.2"/></svg></div><div class="sel" style="left:803px;top:409px;width:51px;height:19px;font-size:13px;line-height:17px;"><span style="position:absolute;left:4px;top:0">终指</span><svg class="chev" width="10" height="7" viewBox="0 0 10 7" style="position:absolute;right:4px;top:6px"><path d="M0.8 1 L5 5.2 L9.2 1" fill="none" stroke="#000" stroke-width="2.2"/></svg></div><div class="sel" style="left:936px;top:409px;width:50px;height:19px;font-size:13px;line-height:17px;"><span style="position:absolute;left:5px;top:0">全场</span><svg class="chev" width="10" height="7" viewBox="0 0 10 7" style="position:absolute;right:4px;top:6px"><path d="M0.8 1 L5 5.2 L9.2 1" fill="none" stroke="#000" stroke-width="2.2"/></svg></div><div class="a" style="left:499px;top:428px;width:59px;height:20px;border:1px solid #BFBFBF;background:#DCE3EC;line-height:16px;padding-top:2px;text-align:center;color:#222222;">主</div><div class="a" style="left:557px;top:428px;width:71px;height:20px;border:1px solid #BFBFBF;background:#DCE3EC;line-height:16px;padding-top:2px;text-align:center;color:#222222;">让球</div><div class="a" style="left:627px;top:428px;width:62px;height:20px;border:1px solid #BFBFBF;background:#DCE3EC;line-height:16px;padding-top:2px;text-align:center;color:#222222;">客</div><div class="a" style="left:688px;top:428px;width:73px;height:20px;border:1px solid #BFBFBF;background:#DCE3EC;line-height:16px;padding-top:2px;text-align:center;color:#222222;">主</div><div class="a" style="left:760px;top:428px;width:73px;height:20px;border:1px solid #BFBFBF;background:#DCE3EC;line-height:16px;padding-top:2px;text-align:center;color:#222222;">和</div><div class="a" style="left:832px;top:428px;width:61px;height:20px;border:1px solid #BFBFBF;background:#DCE3EC;line-height:16px;padding-top:2px;text-align:center;color:#222222;">客</div><div class="a" style="left:892px;top:428px;width:40px;height:20px;border:1px solid #BFBFBF;background:#DCE3EC;line-height:16px;padding-top:2px;text-align:center;color:#222222;">胜负</div><div class="a" style="left:931px;top:428px;width:40px;height:20px;border:1px solid #BFBFBF;background:#DCE3EC;line-height:16px;padding-top:2px;text-align:center;color:#222222;">让球</div><div class="a" style="left:970px;top:428px;width:61px;height:20px;border:1px solid #BFBFBF;background:#DCE3EC;line-height:16px;padding-top:2px;text-align:center;color:#222222;">进球数</div><div class="a" style="left:3px;top:447px;width:82px;height:27px;border:1px solid #BFBFBF;background:#B0A8A7;line-height:24px;padding-top:1px;text-align:center;color:#fff;">法乙</div><div class="a" style="left:84px;top:447px;width:79px;height:27px;border:1px solid #BFBFBF;background:#FFFFFF;line-height:24px;padding-top:1px;text-align:center;color:#222222;">25-02-01</div><div class="a" style="left:162px;top:447px;width:96px;height:27px;border:1px solid #BFBFBF;background:#FFFFFF;line-height:24px;padding-top:1px;text-align:center;color:#222222;"><span style="color:#137313">波城</span></div><div class="a" style="left:257px;top:447px;width:93px;height:27px;border:1px solid #BFBFBF;background:#FFFFFF;line-height:24px;padding-top:1px;text-align:center;color:#222222;"><span style="color:#CC1418">1-1</span>(0-0)</div><div class="a" style="left:349px;top:447px;width:41px;height:27px;border:1px solid #BFBFBF;background:#FFFFFF;line-height:24px;padding-top:1px;text-align:center;color:#222222;">8-4</div><div class="a" style="left:389px;top:447px;width:111px;height:27px;border:1px solid #BFBFBF;background:#FFFFFF;line-height:24px;padding-top:1px;text-align:center;color:#222222;">拉瓦勒</div><div class="a" style="left:499px;top:447px;width:59px;height:27px;border:1px solid #BFBFBF;background:#FEF9F6;line-height:24px;padding-top:1px;text-align:center;color:#222222;">0.87</div><div class="a" style="left:557px;top:447px;width:71px;height:27px;border:1px solid #BFBFBF;background:#FEF9F6;line-height:24px;padding-top:1px;text-align:center;color:#222222;">平/半</div><div class="a" style="left:627px;top:447px;width:62px;height:27px;border:1px solid #BFBFBF;background:#FEF9F6;line-height:24px;padding-top:1px;text-align:center;color:#222222;">1.01</div><div class="a" style="left:688px;top:447px;width:73px;height:27px;border:1px solid #BFBFBF;background:#F0F7FB;line-height:24px;padding-top:1px;text-align:center;color:#222222;">2.12</div><div class="a" style="left:760px;top:447px;width:73px;height:27px;border:1px solid #BFBFBF;background:#F0F7FB;line-height:24px;padding-top:1px;text-align:center;color:#222222;">3.27</div><div class="a" style="left:832px;top:447px;width:61px;height:27px;border:1px solid #BFBFBF;background:#F0F7FB;line-height:24px;padding-top:1px;text-align:center;color:#222222;">3.34</div><div class="a" style="left:892px;top:447px;width:40px;height:27px;border:1px solid #BFBFBF;background:#FFFFFF;line-height:24px;padding-top:1px;text-align:center;"><span style="color:#008000">平</span></div><div class="a" style="left:931px;top:447px;width:40px;height:27px;border:1px solid #BFBFBF;background:#FFFFFF;line-height:24px;padding-top:1px;text-align:center;"><span style="color:#0000AA">输</span></div><div class="a" style="left:970px;top:447px;width:61px;height:27px;border:1px solid #BFBFBF;background:#FFFFFF;line-height:24px;padding-top:1px;text-align:center;"><span style="color:#1422A0">小</span></div><div class="a" style="left:3px;top:473px;width:82px;height:27px;border:1px solid #BFBFBF;background:#B0A8A7;line-height:24px;padding-top:1px;text-align:center;color:#fff;">法乙</div><div class="a" style="left:84px;top:473px;width:79px;height:27px;border:1px solid #BFBFBF;background:#F0F0F0;line-height:24px;padding-top:1px;text-align:center;color:#222222;">25-01-25</div><div class="a" style="left:162px;top:473px;width:96px;height:27px;border:1px solid #BFBFBF;background:#F0F0F0;line-height:24px;padding-top:1px;text-align:center;color:#222222;">巴斯蒂亚</div><div class="a" style="left:257px;top:473px;width:93px;height:27px;border:1px solid #BFBFBF;background:#F0F0F0;line-height:24px;padding-top:1px;text-align:center;color:#222222;"><span style="color:#CC1418">1-1</span>(0-0)</div><div class="a" style="left:349px;top:473px;width:41px;height:27px;border:1px solid #BFBFBF;background:#F0F0F0;line-height:24px;padding-top:1px;text-align:center;color:#222222;">8-3</div><div class="a" style="left:389px;top:473px;width:111px;height:27px;border:1px solid #BFBFBF;background:#F0F0F0;line-height:24px;padding-top:1px;text-align:center;color:#222222;"><span style="color:#137313">波城</span></div><div class="a" style="left:499px;top:473px;width:59px;height:27px;border:1px solid #BFBFBF;background:#FEF9F6;line-height:24px;padding-top:1px;text-align:center;color:#222222;">0.96</div><div class="a" style="left:557px;top:473px;width:71px;height:27px;border:1px solid #BFBFBF;background:#FEF9F6;line-height:24px;padding-top:1px;text-align:center;color:#222222;">半球</div><div class="a" style="left:627px;top:473px;width:62px;height:27px;border:1px solid #BFBFBF;background:#FEF9F6;line-height:24px;padding-top:1px;text-align:center;color:#222222;">0.92</div><div class="a" style="left:688px;top:473px;width:73px;height:27px;border:1px solid #BFBFBF;background:#F0F7FB;line-height:24px;padding-top:1px;text-align:center;color:#222222;">1.89</div><div class="a" style="left:760px;top:473px;width:73px;height:27px;border:1px solid #BFBFBF;background:#F0F7FB;line-height:24px;padding-top:1px;text-align:center;color:#222222;">3.38</div><div class="a" style="left:832px;top:473px;width:61px;height:27px;border:1px solid #BFBFBF;background:#F0F7FB;line-height:24px;padding-top:1px;text-align:center;color:#222222;">3.97</div><div class="a" style="left:892px;top:473px;width:40px;height:27px;border:1px solid #BFBFBF;background:#F0F0F0;line-height:24px;padding-top:1px;text-align:center;"><span style="color:#008000">平</span></div><div class="a" style="left:931px;top:473px;width:40px;height:27px;border:1px solid #BFBFBF;background:#F0F0F0;line-height:24px;padding-top:1px;text-align:center;"><span style="color:#CC0000">赢</span></div><div class="a" style="left:970px;top:473px;width:61px;height:27px;border:1px solid #BFBFBF;background:#F0F0F0;line-height:24px;padding-top:1px;text-align:center;"><span style="color:#1422A0">小</span></div><div class="a" style="left:3px;top:499px;width:82px;height:27px;border:1px solid #BFBFBF;background:#B0A8A7;line-height:24px;padding-top:1px;text-align:center;color:#fff;">法乙</div><div class="a" style="left:84px;top:499px;width:79px;height:27px;border:1px solid #BFBFBF;background:#FFFFFF;line-height:24px;padding-top:1px;text-align:center;color:#222222;">25-01-18</div><div class="a" style="left:162px;top:499px;width:96px;height:27px;border:1px solid #BFBFBF;background:#FFFFFF;line-height:24px;padding-top:1px;text-align:center;color:#222222;">红星</div><div class="a" style="left:257px;top:499px;width:93px;height:27px;border:1px solid #BFBFBF;background:#FFFFFF;line-height:24px;padding-top:1px;text-align:center;color:#222222;"><span style="color:#CC1418">1-3</span>(1-1)</div><div class="a" style="left:349px;top:499px;width:41px;height:27px;border:1px solid #BFBFBF;background:#FFFFFF;line-height:24px;padding-top:1px;text-align:center;color:#222222;">7-5</div><div class="a" style="left:389px;top:499px;width:111px;height:27px;border:1px solid #BFBFBF;background:#FFFFFF;line-height:24px;padding-top:1px;text-align:center;color:#222222;"><span style="color:#137313">波城</span></div><div class="a" style="left:499px;top:499px;width:59px;height:27px;border:1px solid #BFBFBF;background:#FEF9F6;line-height:24px;padding-top:1px;text-align:center;color:#222222;">1.05</div><div class="a" style="left:557px;top:499px;width:71px;height:27px;border:1px solid #BFBFBF;background:#FEF9F6;line-height:24px;padding-top:1px;text-align:center;color:#222222;">平手</div><div class="a" style="left:627px;top:499px;width:62px;height:27px;border:1px solid #BFBFBF;background:#FEF9F6;line-height:24px;padding-top:1px;text-align:center;color:#222222;">0.83</div><div class="a" style="left:688px;top:499px;width:73px;height:27px;border:1px solid #BFBFBF;background:#F0F7FB;line-height:24px;padding-top:1px;text-align:center;color:#222222;">2.71</div><div class="a" style="left:760px;top:499px;width:73px;height:27px;border:1px solid #BFBFBF;background:#F0F7FB;line-height:24px;padding-top:1px;text-align:center;color:#222222;">3.20</div><div class="a" style="left:832px;top:499px;width:61px;height:27px;border:1px solid #BFBFBF;background:#F0F7FB;line-height:24px;padding-top:1px;text-align:center;color:#222222;">2.53</div><div class="a" style="left:892px;top:499px;width:40px;height:27px;border:1px solid #BFBFBF;background:#FFFFFF;line-height:24px;padding-top:1px;text-align:center;"><span style="color:#E80000">胜</span></div><div class="a" style="left:931px;top:499px;width:40px;height:27px;border:1px solid #BFBFBF;background:#FFFFFF;line-height:24px;padding-top:1px;text-align:center;"><span style="color:#CC0000">赢</span></div><div class="a" style="left:970px;top:499px;width:61px;height:27px;border:1px solid #BFBFBF;background:#FFFFFF;line-height:24px;padding-top:1px;text-align:center;"><span style="color:#D40000">大</span></div><div class="a" style="left:3px;top:525px;width:82px;height:27px;border:1px solid #BFBFBF;background:#B0A8A7;line-height:24px;padding-top:1px;text-align:center;color:#fff;">法乙</div><div class="a" style="left:84px;top:525px;width:79px;height:27px;border:1px solid #BFBFBF;background:#F0F0F0;line-height:24px;padding-top:1px;text-align:center;color:#222222;">25-01-11</div><div class="a" style="left:162px;top:525px;width:96px;height:27px;border:1px solid #BFBFBF;background:#F0F0F0;line-height:24px;padding-top:1px;text-align:center;color:#222222;"><span style="color:#137313">波城</span></div><div class="a" style="left:257px;top:525px;width:93px;height:27px;border:1px solid #BFBFBF;background:#F0F0F0;line-height:24px;padding-top:1px;text-align:center;color:#222222;"><span style="color:#CC1418">1-1</span>(0-1)</div><div class="a" style="left:349px;top:525px;width:41px;height:27px;border:1px solid #BFBFBF;background:#F0F0F0;line-height:24px;padding-top:1px;text-align:center;color:#222222;">4-1</div><div class="a" style="left:389px;top:525px;width:111px;height:27px;border:1px solid #BFBFBF;background:#F0F0F0;line-height:24px;padding-top:1px;text-align:center;color:#222222;">USL敦刻尔克</div><div class="a" style="left:499px;top:525px;width:59px;height:27px;border:1px solid #BFBFBF;background:#FEF9F6;line-height:24px;padding-top:1px;text-align:center;color:#222222;">1.02</div><div class="a" style="left:557px;top:525px;width:71px;height:27px;border:1px solid #BFBFBF;background:#FEF9F6;line-height:24px;padding-top:1px;text-align:center;color:#222222;">平手</div><div class="a" style="left:627px;top:525px;width:62px;height:27px;border:1px solid #BFBFBF;background:#FEF9F6;line-height:24px;padding-top:1px;text-align:center;color:#222222;">0.86</div><div class="a" style="left:688px;top:525px;width:73px;height:27px;border:1px solid #BFBFBF;background:#F0F7FB;line-height:24px;padding-top:1px;text-align:center;color:#222222;">2.52</div><div class="a" style="left:760px;top:525px;width:73px;height:27px;border:1px solid #BFBFBF;background:#F0F7FB;line-height:24px;padding-top:1px;text-align:center;color:#222222;">3.23</div><div class="a" style="left:832px;top:525px;width:61px;height:27px;border:1px solid #BFBFBF;background:#F0F7FB;line-height:24px;padding-top:1px;text-align:center;color:#222222;">2.71</div><div class="a" style="left:892px;top:525px;width:40px;height:27px;border:1px solid #BFBFBF;background:#F0F0F0;line-height:24px;padding-top:1px;text-align:center;"><span style="color:#008000">平</span></div><div class="a" style="left:931px;top:525px;width:40px;height:27px;border:1px solid #BFBFBF;background:#F0F0F0;line-height:24px;padding-top:1px;text-align:center;"><span style="color:#008000">走</span></div><div class="a" style="left:970px;top:525px;width:61px;height:27px;border:1px solid #BFBFBF;background:#F0F0F0;line-height:24px;padding-top:1px;text-align:center;"><span style="color:#1422A0">小</span></div><div class="a" style="left:3px;top:551px;width:82px;height:27px;border:1px solid #BFBFBF;background:#B0A8A7;line-height:24px;padding-top:1px;text-align:center;color:#fff;">法乙</div><div class="a" style="left:84px;top:551px;width:79px;height:27px;border:1px solid #BFBFBF;background:#FFFFFF;line-height:24px;padding-top:1px;text-align:center;color:#222222;">25-01-04</div><div class="a" style="left:162px;top:551px;width:96px;height:27px;border:1px solid #BFBFBF;background:#FFFFFF;line-height:24px;padding-top:1px;text-align:center;color:#222222;">梅斯</div><div class="a" style="left:257px;top:551px;width:93px;height:27px;border:1px solid #BFBFBF;background:#FFFFFF;line-height:24px;padding-top:1px;text-align:center;color:#222222;"><span style="color:#CC1418">0-0</span>(0-0)</div><div class="a" style="left:349px;top:551px;width:41px;height:27px;border:1px solid #BFBFBF;background:#FFFFFF;line-height:24px;padding-top:1px;text-align:center;color:#222222;">6-6</div><div class="a" style="left:389px;top:551px;width:111px;height:27px;border:1px solid #BFBFBF;background:#FFFFFF;line-height:24px;padding-top:1px;text-align:center;color:#222222;"><span style="color:#137313">波城</span></div><div class="a" style="left:499px;top:551px;width:59px;height:27px;border:1px solid #BFBFBF;background:#FEF9F6;line-height:24px;padding-top:1px;text-align:center;color:#222222;">0.86</div><div class="a" style="left:557px;top:551px;width:71px;height:27px;border:1px solid #BFBFBF;background:#FEF9F6;line-height:24px;padding-top:1px;text-align:center;color:#222222;">半球</div><div class="a" style="left:627px;top:551px;width:62px;height:27px;border:1px solid #BFBFBF;background:#FEF9F6;line-height:24px;padding-top:1px;text-align:center;color:#222222;">1.02</div><div class="a" style="left:688px;top:551px;width:73px;height:27px;border:1px solid #BFBFBF;background:#F0F7FB;line-height:24px;padding-top:1px;text-align:center;color:#222222;">1.76</div><div class="a" style="left:760px;top:551px;width:73px;height:27px;border:1px solid #BFBFBF;background:#F0F7FB;line-height:24px;padding-top:1px;text-align:center;color:#222222;">3.53</div><div class="a" style="left:832px;top:551px;width:61px;height:27px;border:1px solid #BFBFBF;background:#F0F7FB;line-height:24px;padding-top:1px;text-align:center;color:#222222;">4.41</div><div class="a" style="left:892px;top:551px;width:40px;height:27px;border:1px solid #BFBFBF;background:#FFFFFF;line-height:24px;padding-top:1px;text-align:center;"><span style="color:#008000">平</span></div><div class="a" style="left:931px;top:551px;width:40px;height:27px;border:1px solid #BFBFBF;background:#FFFFFF;line-height:24px;padding-top:1px;text-align:center;"><span style="color:#CC0000">赢</span></div><div class="a" style="left:970px;top:551px;width:61px;height:27px;border:1px solid #BFBFBF;background:#FFFFFF;line-height:24px;padding-top:1px;text-align:center;"><span style="color:#1422A0">小</span></div><div class="a" style="left:3px;top:577px;width:82px;height:27px;border:1px solid #BFBFBF;background:#B0A8A7;line-height:24px;padding-top:1px;text-align:center;color:#fff;">法乙</div><div class="a" style="left:84px;top:577px;width:79px;height:27px;border:1px solid #BFBFBF;background:#F0F0F0;line-height:24px;padding-top:1px;text-align:center;color:#222222;">24-12-14</div><div class="a" style="left:162px;top:577px;width:96px;height:27px;border:1px solid #BFBFBF;background:#F0F0F0;line-height:24px;padding-top:1px;text-align:center;color:#222222;"><span style="color:#137313">波城</span></div><div class="a" style="left:257px;top:577px;width:93px;height:27px;border:1px solid #BFBFBF;background:#F0F0F0;line-height:24px;padding-top:1px;text-align:center;color:#222222;"><span style="color:#CC1418">1-0</span>(1-0)</div><div class="a" style="left:349px;top:577px;width:41px;height:27px;border:1px solid #BFBFBF;background:#F0F0F0;line-height:24px;padding-top:1px;text-align:center;color:#222222;">4-4</div><div class="a" style="left:389px;top:577px;width:111px;height:27px;border:1px solid #BFBFBF;background:#F0F0F0;line-height:24px;padding-top:1px;text-align:center;color:#222222;">阿雅克肖<span class="rc">1</span></div><div class="a" style="left:499px;top:577px;width:59px;height:27px;border:1px solid #BFBFBF;background:#FEF9F6;line-height:24px;padding-top:1px;text-align:center;color:#222222;">1.02</div><div class="a" style="left:557px;top:577px;width:71px;height:27px;border:1px solid #BFBFBF;background:#FEF9F6;line-height:24px;padding-top:1px;text-align:center;color:#222222;">一球</div><div class="a" style="left:627px;top:577px;width:62px;height:27px;border:1px solid #BFBFBF;background:#FEF9F6;line-height:24px;padding-top:1px;text-align:center;color:#222222;">0.86</div><div class="a" style="left:688px;top:577px;width:73px;height:27px;border:1px solid #BFBFBF;background:#F0F7FB;line-height:24px;padding-top:1px;text-align:center;color:#222222;">1.55</div><div class="a" style="left:760px;top:577px;width:73px;height:27px;border:1px solid #BFBFBF;background:#F0F7FB;line-height:24px;padding-top:1px;text-align:center;color:#222222;">3.81</div><div class="a" style="left:832px;top:577px;width:61px;height:27px;border:1px solid #BFBFBF;background:#F0F7FB;line-height:24px;padding-top:1px;text-align:center;color:#222222;">5.96</div><div class="a" style="left:892px;top:577px;width:40px;height:27px;border:1px solid #BFBFBF;background:#F0F0F0;line-height:24px;padding-top:1px;text-align:center;"><span style="color:#E80000">胜</span></div><div class="a" style="left:931px;top:577px;width:40px;height:27px;border:1px solid #BFBFBF;background:#F0F0F0;line-height:24px;padding-top:1px;text-align:center;"><span style="color:#008000">走</span></div><div class="a" style="left:970px;top:577px;width:61px;height:27px;border:1px solid #BFBFBF;background:#F0F0F0;line-height:24px;padding-top:1px;text-align:center;"><span style="color:#1422A0">小</span></div><div class="a" style="left:3px;top:603px;width:82px;height:27px;border:1px solid #BFBFBF;background:#B0A8A7;line-height:24px;padding-top:1px;text-align:center;color:#fff;">法乙</div><div class="a" style="left:84px;top:603px;width:79px;height:27px;border:1px solid #BFBFBF;background:#FFFFFF;line-height:24px;padding-top:1px;text-align:center;color:#222222;">24-12-07</div><div class="a" style="left:162px;top:603px;width:96px;height:27px;border:1px solid #BFBFBF;background:#FFFFFF;line-height:24px;padding-top:1px;text-align:center;color:#222222;">罗德兹</div><div class="a" style="left:257px;top:603px;width:93px;height:27px;border:1px solid #BFBFBF;background:#FFFFFF;line-height:24px;padding-top:1px;text-align:center;color:#222222;"><span style="color:#CC1418">1-0</span>(0-0)</div><div class="a" style="left:349px;top:603px;width:41px;height:27px;border:1px solid #BFBFBF;background:#FFFFFF;line-height:24px;padding-top:1px;text-align:center;color:#222222;">12-4</div><div class="a" style="left:389px;top:603px;width:111px;height:27px;border:1px solid #BFBFBF;background:#FFFFFF;line-height:24px;padding-top:1px;text-align:center;color:#222222;"><span style="color:#137313">波城</span></div><div class="a" style="left:499px;top:603px;width:59px;height:27px;border:1px solid #BFBFBF;background:#FEF9F6;line-height:24px;padding-top:1px;text-align:center;color:#222222;">0.91</div><div class="a" style="left:557px;top:603px;width:71px;height:27px;border:1px solid #BFBFBF;background:#FEF9F6;line-height:24px;padding-top:1px;text-align:center;color:#222222;">平手</div><div class="a" style="left:627px;top:603px;width:62px;height:27px;border:1px solid #BFBFBF;background:#FEF9F6;line-height:24px;padding-top:1px;text-align:center;color:#222222;">0.97</div><div class="a" style="left:688px;top:603px;width:73px;height:27px;border:1px solid #BFBFBF;background:#F0F7FB;line-height:24px;padding-top:1px;text-align:center;color:#222222;">2.35</div><div class="a" style="left:760px;top:603px;width:73px;height:27px;border:1px solid #BFBFBF;background:#F0F7FB;line-height:24px;padding-top:1px;text-align:center;color:#222222;">3.50</div><div class="a" style="left:832px;top:603px;width:61px;height:27px;border:1px solid #BFBFBF;background:#F0F7FB;line-height:24px;padding-top:1px;text-align:center;color:#222222;">2.75</div><div class="a" style="left:892px;top:603px;width:40px;height:27px;border:1px solid #BFBFBF;background:#FFFFFF;line-height:24px;padding-top:1px;text-align:center;"><span style="color:#0000C8">负</span></div><div class="a" style="left:931px;top:603px;width:40px;height:27px;border:1px solid #BFBFBF;background:#FFFFFF;line-height:24px;padding-top:1px;text-align:center;"><span style="color:#0000AA">输</span></div><div class="a" style="left:970px;top:603px;width:61px;height:27px;border:1px solid #BFBFBF;background:#FFFFFF;line-height:24px;padding-top:1px;text-align:center;"><span style="color:#1422A0">小</span></div><div class="a" style="left:3px;top:629px;width:82px;height:27px;border:1px solid #BFBFBF;background:#2A7AA5;line-height:24px;padding-top:1px;text-align:center;color:#fff;">法国杯</div><div class="a" style="left:84px;top:629px;width:79px;height:27px;border:1px solid #BFBFBF;background:#F0F0F0;line-height:24px;padding-top:1px;text-align:center;color:#222222;">24-11-30</div><div class="a" style="left:162px;top:629px;width:96px;height:27px;border:1px solid #BFBFBF;background:#F0F0F0;line-height:24px;padding-top:1px;text-align:center;color:#222222;">圣菲尔伯特</div><div class="a" style="left:257px;top:629px;width:93px;height:27px;border:1px solid #BFBFBF;background:#F0F0F0;line-height:24px;padding-top:1px;text-align:center;color:#222222;"><span style="color:#CC1418">1-1</span>(1-0)</div><div class="a" style="left:349px;top:629px;width:41px;height:27px;border:1px solid #BFBFBF;background:#F0F0F0;line-height:24px;padding-top:1px;text-align:center;color:#222222;">2-14</div><div class="a" style="left:389px;top:629px;width:111px;height:27px;border:1px solid #BFBFBF;background:#F0F0F0;line-height:24px;padding-top:1px;text-align:center;color:#222222;"><span style="color:#137313">波城</span></div><div class="a" style="left:499px;top:629px;width:59px;height:27px;border:1px solid #BFBFBF;background:#FEF9F6;line-height:24px;padding-top:1px;text-align:center;color:#222222;"></div><div class="a" style="left:557px;top:629px;width:71px;height:27px;border:1px solid #BFBFBF;background:#FEF9F6;line-height:24px;padding-top:1px;text-align:center;color:#222222;"></div><div class="a" style="left:627px;top:629px;width:62px;height:27px;border:1px solid #BFBFBF;background:#FEF9F6;line-height:24px;padding-top:1px;text-align:center;color:#222222;"></div><div class="a" style="left:688px;top:629px;width:73px;height:27px;border:1px solid #BFBFBF;background:#F0F7FB;line-height:24px;padding-top:1px;text-align:center;color:#222222;">39.74</div><div class="a" style="left:760px;top:629px;width:73px;height:27px;border:1px solid #BFBFBF;background:#F0F7FB;line-height:24px;padding-top:1px;text-align:center;color:#222222;">12.93</div><div class="a" style="left:832px;top:629px;width:61px;height:27px;border:1px solid #BFBFBF;background:#F0F7FB;line-height:24px;padding-top:1px;text-align:center;color:#222222;">1.03</div><div class="a" style="left:892px;top:629px;width:40px;height:27px;border:1px solid #BFBFBF;background:#F0F0F0;line-height:24px;padding-top:1px;text-align:center;"><span style="color:#008000">平</span></div><div class="a" style="left:931px;top:629px;width:40px;height:27px;border:1px solid #BFBFBF;background:#F0F0F0;line-height:24px;padding-top:1px;text-align:center;"></div><div class="a" style="left:970px;top:629px;width:61px;height:27px;border:1px solid #BFBFBF;background:#F0F0F0;line-height:24px;padding-top:1px;text-align:center;"></div><div class="a" style="left:3px;top:655px;width:82px;height:27px;border:1px solid #BFBFBF;background:#B0A8A7;line-height:24px;padding-top:1px;text-align:center;color:#fff;">法乙</div><div class="a" style="left:84px;top:655px;width:79px;height:27px;border:1px solid #BFBFBF;background:#FFFFFF;line-height:24px;padding-top:1px;text-align:center;color:#222222;">24-11-23</div><div class="a" style="left:162px;top:655px;width:96px;height:27px;border:1px solid #BFBFBF;background:#FFFFFF;line-height:24px;padding-top:1px;text-align:center;color:#222222;"><span style="color:#137313">波城</span></div><div class="a" style="left:257px;top:655px;width:93px;height:27px;border:1px solid #BFBFBF;background:#FFFFFF;line-height:24px;padding-top:1px;text-align:center;color:#222222;"><span style="color:#CC1418">4-1</span>(1-1)</div><div class="a" style="left:349px;top:655px;width:41px;height:27px;border:1px solid #BFBFBF;background:#FFFFFF;line-height:24px;padding-top:1px;text-align:center;color:#222222;">6-2</div><div class="a" style="left:389px;top:655px;width:111px;height:27px;border:1px solid #BFBFBF;background:#FFFFFF;line-height:24px;padding-top:1px;text-align:center;color:#222222;">红星</div><div class="a" style="left:499px;top:655px;width:59px;height:27px;border:1px solid #BFBFBF;background:#FEF9F6;line-height:24px;padding-top:1px;text-align:center;color:#222222;">0.95</div><div class="a" style="left:557px;top:655px;width:71px;height:27px;border:1px solid #BFBFBF;background:#FEF9F6;line-height:24px;padding-top:1px;text-align:center;color:#222222;">半球</div><div class="a" style="left:627px;top:655px;width:62px;height:27px;border:1px solid #BFBFBF;background:#FEF9F6;line-height:24px;padding-top:1px;text-align:center;color:#222222;">0.93</div><div class="a" style="left:688px;top:655px;width:73px;height:27px;border:1px solid #BFBFBF;background:#F0F7FB;line-height:24px;padding-top:1px;text-align:center;color:#222222;">1.91</div><div class="a" style="left:760px;top:655px;width:73px;height:27px;border:1px solid #BFBFBF;background:#F0F7FB;line-height:24px;padding-top:1px;text-align:center;color:#222222;">3.43</div><div class="a" style="left:832px;top:655px;width:61px;height:27px;border:1px solid #BFBFBF;background:#F0F7FB;line-height:24px;padding-top:1px;text-align:center;color:#222222;">3.80</div><div class="a" style="left:892px;top:655px;width:40px;height:27px;border:1px solid #BFBFBF;background:#FFFFFF;line-height:24px;padding-top:1px;text-align:center;"><span style="color:#E80000">胜</span></div><div class="a" style="left:931px;top:655px;width:40px;height:27px;border:1px solid #BFBFBF;background:#FFFFFF;line-height:24px;padding-top:1px;text-align:center;"><span style="color:#CC0000">赢</span></div><div class="a" style="left:970px;top:655px;width:61px;height:27px;border:1px solid #BFBFBF;background:#FFFFFF;line-height:24px;padding-top:1px;text-align:center;"><span style="color:#D40000">大</span></div><div class="a" style="left:3px;top:681px;width:82px;height:27px;border:1px solid #BFBFBF;background:#2A7AA5;line-height:24px;padding-top:1px;text-align:center;color:#fff;">法国杯</div><div class="a" style="left:84px;top:681px;width:79px;height:27px;border:1px solid #BFBFBF;background:#F0F0F0;line-height:24px;padding-top:1px;text-align:center;color:#222222;">24-11-16</div><div class="a" style="left:162px;top:681px;width:96px;height:27px;border:1px solid #BFBFBF;background:#F0F0F0;line-height:24px;padding-top:1px;text-align:center;color:#222222;">巴奥尼</div><div class="a" style="left:257px;top:681px;width:93px;height:27px;border:1px solid #BFBFBF;background:#F0F0F0;line-height:24px;padding-top:1px;text-align:center;color:#222222;"><span style="color:#CC1418">1-3</span>(1-2)</div><div class="a" style="left:349px;top:681px;width:41px;height:27px;border:1px solid #BFBFBF;background:#F0F0F0;line-height:24px;padding-top:1px;text-align:center;color:#222222;">0-0</div><div class="a" style="left:389px;top:681px;width:111px;height:27px;border:1px solid #BFBFBF;background:#F0F0F0;line-height:24px;padding-top:1px;text-align:center;color:#222222;"><span style="color:#137313">波城</span></div><div class="a" style="left:499px;top:681px;width:59px;height:27px;border:1px solid #BFBFBF;background:#FEF9F6;line-height:24px;padding-top:1px;text-align:center;color:#222222;"></div><div class="a" style="left:557px;top:681px;width:71px;height:27px;border:1px solid #BFBFBF;background:#FEF9F6;line-height:24px;padding-top:1px;text-align:center;color:#222222;"></div><div class="a" style="left:627px;top:681px;width:62px;height:27px;border:1px solid #BFBFBF;background:#FEF9F6;line-height:24px;padding-top:1px;text-align:center;color:#222222;"></div><div class="a" style="left:688px;top:681px;width:73px;height:27px;border:1px solid #BFBFBF;background:#F0F7FB;line-height:24px;padding-top:1px;text-align:center;color:#222222;"></div><div class="a" style="left:760px;top:681px;width:73px;height:27px;border:1px solid #BFBFBF;background:#F0F7FB;line-height:24px;padding-top:1px;text-align:center;color:#222222;"></div><div class="a" style="left:832px;top:681px;width:61px;height:27px;border:1px solid #BFBFBF;background:#F0F7FB;line-height:24px;padding-top:1px;text-align:center;color:#222222;"></div><div class="a" style="left:892px;top:681px;width:40px;height:27px;border:1px solid #BFBFBF;background:#F0F0F0;line-height:24px;padding-top:1px;text-align:center;"><span style="color:#E80000">胜</span></div><div class="a" style="left:931px;top:681px;width:40px;height:27px;border:1px solid #BFBFBF;background:#F0F0F0;line-height:24px;padding-top:1px;text-align:center;"></div><div class="a" style="left:970px;top:681px;width:61px;height:27px;border:1px solid #BFBFBF;background:#F0F0F0;line-height:24px;padding-top:1px;text-align:center;"></div><div class="a" style="left:3px;top:707px;width:1028px;height:20px;border:1px solid #BFBFBF;background:#fff;"></div></body></html>
